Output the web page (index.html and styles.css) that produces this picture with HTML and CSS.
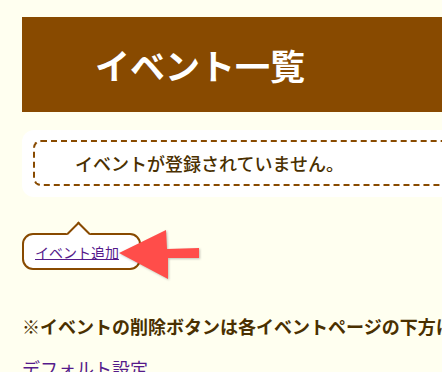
FILE: index.html
```html
<!DOCTYPE html>
<html lang="ja">
<head>
    <meta charset="UTF-8">
    <title>イベント一覧</title>
    <link rel="stylesheet" href="styles.css">
</head>
<body>
    <div class="page">
        <h1 class="page-title">イベント一覧</h1>

        <div class="notice">
            <div class="notice-inner">イベントが登録されていません。</div>
        </div>

        <div class="add-wrap">
            <div class="bubble"><a href="#" class="visited">イベント追加</a></div>
            <svg class="arrow" width="90" height="60" viewBox="0 0 90 60">
                <polygon points="3,27 50,4 51,23 83,22 83,32 52,32 52,53" fill="#ff4d4a"/>
            </svg>
        </div>

        <p class="note">※イベントの削除ボタンは各イベントページの下方にあります。</p>

        <a href="#" class="visited default-link">デフォルト設定</a>
    </div>
</body>
</html>
```

FILE: styles.css
```css
/* --- GENERALE --- */
html, body {
    margin: 0;
    padding: 0;
    overflow: hidden;
    background-color: #fffff0;
    font-family: "Noto Sans CJK JP", "Noto Sans", sans-serif;
    color: #553300;
}

.page {
    width: 540px;
    padding: 17px 0 0 22px;
}

a.visited {
    color: #551a8b;
}

/* --- TITOLO --- */
.page-title {
    margin: 0;
    height: 95px;
    display: flex;
    align-items: center;
    padding-left: 73px;
    background-color: #884a00;
    color: #ffffff;
    font-size: 35px;
    font-weight: bold;
    line-height: 1;
}

/* --- MESSAGGIO --- */
.notice {
    margin-top: 18px;
    background-color: #ffffff;
    border-radius: 12px;
    padding: 10px 0 11px 11px;
}

.notice-inner {
    height: 42px;
    display: flex;
    align-items: center;
    padding-left: 40px;
    border: 2px dashed #884a00;
    border-radius: 8px;
    font-size: 18px;
    font-weight: 500;
    color: #4a3000;
}

/* --- PULSANTE AGGIUNGI --- */
.add-wrap {
    position: relative;
    margin-top: 36px;
    height: 37px;
}

.bubble {
    position: relative;
    display: inline-block;
    box-sizing: border-box;
    height: 37px;
    padding: 4px 20px 0 11px;
    background-color: #ffffff;
    border: 2.5px solid #884a00;
    border-radius: 11px;
    font-size: 14px;
    line-height: 26px;
}

/* punta del fumetto */
.bubble::before {
    content: "";
    position: absolute;
    top: -10px;
    left: 46px;
    width: 15px;
    height: 15px;
    background-color: #ffffff;
    border-top: 2.5px solid #884a00;
    border-left: 2.5px solid #884a00;
    transform: rotate(45deg);
}

.arrow {
    position: absolute;
    left: 94px;
    top: -7px;
    filter: drop-shadow(1px 1px 1px rgba(0, 0, 0, 0.25));
}

/* --- NOTA --- */
.note {
    margin: 43px 0 0 0;
    font-size: 18px;
    font-weight: bold;
    white-space: nowrap;
    color: #4a3000;
}

.default-link {
    display: inline-block;
    margin-top: 16px;
    font-size: 18px;
}
```
